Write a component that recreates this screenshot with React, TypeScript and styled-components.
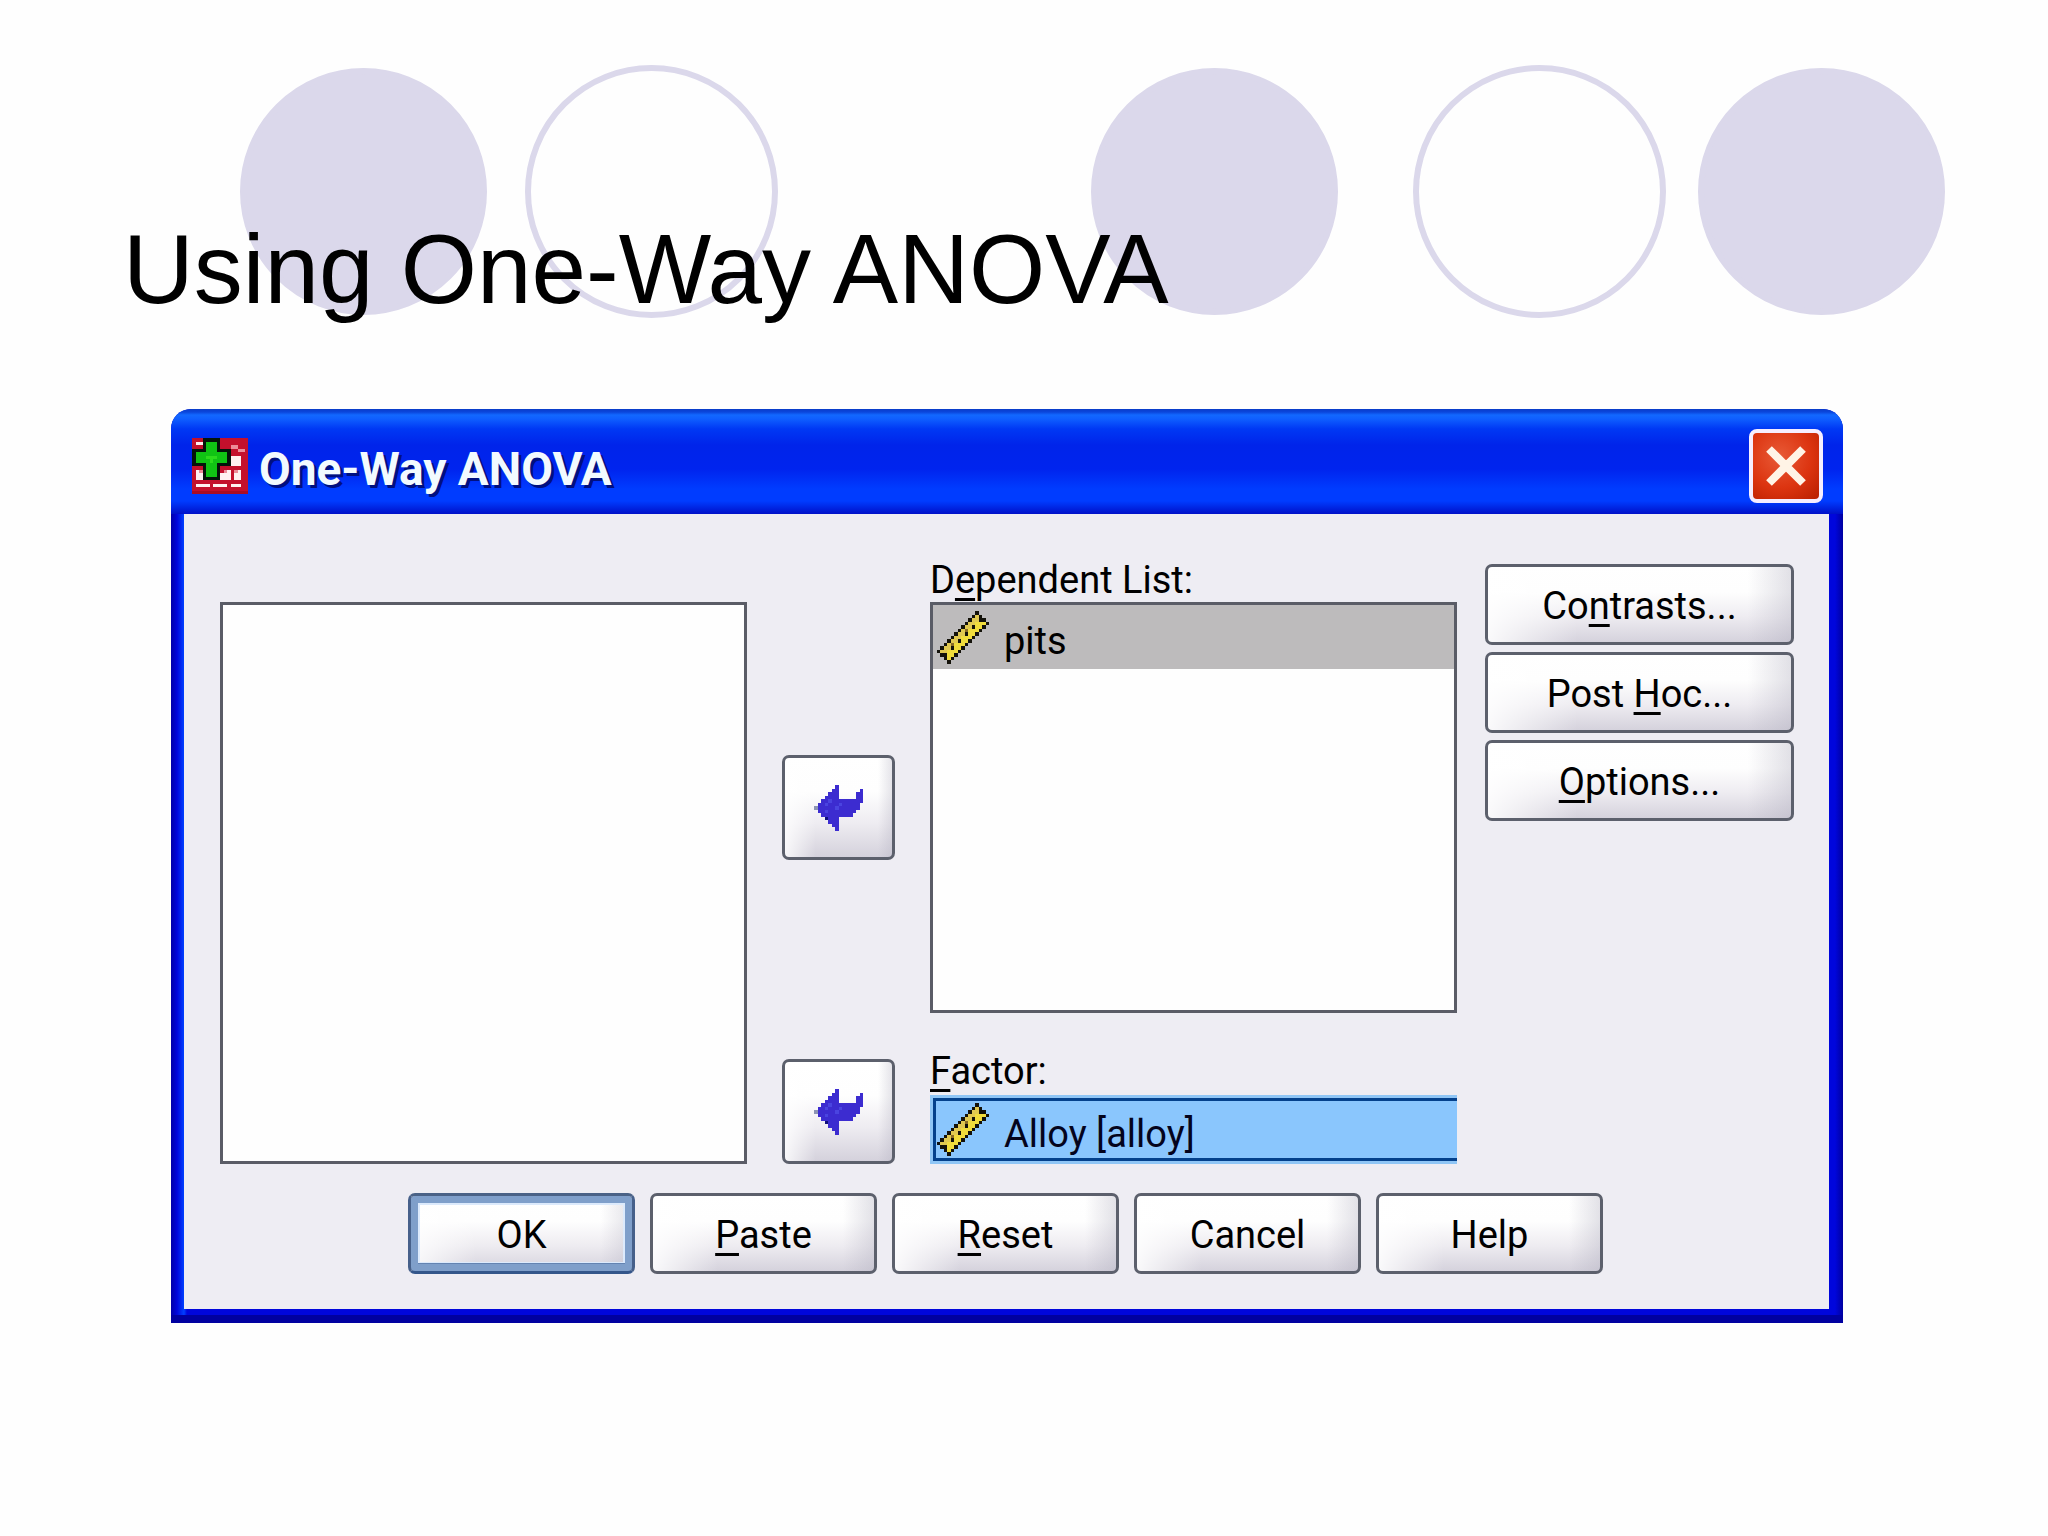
import React from "react";
import styled, { createGlobalStyle, css } from "styled-components";

const GlobalStyle = createGlobalStyle`
  *, *::before, *::after { box-sizing: border-box; }
  body { margin: 0; background: #fefefe; }
`;

const uiFont = css`
  font-family: Roboto, "Open Sans", sans-serif;
  font-size: 38px;
  line-height: 44px;
  color: #000;
`;

const Slide = styled.main`
  min-height: 100vh;
  background: #fefefe;
`;

const Header = styled.header`
  display: grid;
  padding: 65px 0 84px;
`;

const Circles = styled.div`
  grid-area: 1 / 1;
  display: flex;
  align-items: center;
  height: 253px;
  padding-left: 240px;
`;

const Circle = styled.span<{ $ring?: boolean; $gap: number }>`
  flex: none;
  width: ${(p) => (p.$ring ? 253 : 247)}px;
  height: ${(p) => (p.$ring ? 253 : 247)}px;
  margin-right: ${(p) => p.$gap}px;
  border-radius: 50%;
  border: 6px solid #dbd8eb;
  background: ${(p) => (p.$ring ? "transparent" : "#dbd8eb")};
`;

const SlideTitle = styled.h1`
  grid-area: 1 / 1;
  z-index: 1;
  margin: 0;
  padding: 148px 0 0 123px;
  font: 400 98px/112px "Liberation Sans", Arial, sans-serif;
  color: #000;
`;

const Window = styled.section`
  margin: 0 205px 0 171px;
  padding: 0 14px 14px 13px;
  border-radius: 20px 20px 0 0;
  background: linear-gradient(to right, #0000a8, #0006dc 6px, #0040ff 13px, #0006dc 16px, #0006dc calc(100% - 8px), #0000a0);
  box-shadow: inset 0 -8px 0 #0000a0;
`;

const TitleBar = styled.div`
  display: flex;
  align-items: center;
  gap: 11px;
  height: 105px;
  margin: 0 -14px 0 -13px;
  padding: 9px 20px 0 21px;
  border-radius: 20px 20px 0 0;
  background: linear-gradient(
    to bottom,
    #0a3cc8 0,
    #0a46dc 3px,
    #1268ff 6px,
    #0f5eff 10px,
    #0038f4 20px,
    #0024ea 36px,
    #0024ee 60px,
    #003cff 80px,
    #003cff 92px,
    #0010c8 105px
  );
`;

const WindowTitle = styled.h2`
  flex: 1;
  margin: 0;
  padding-top: 6px;
  font: 700 46px/56px Roboto, "Open Sans", sans-serif;
  color: #f2faff;
  text-shadow: 3px 3px 0 #001080;
`;

const CloseButton = styled.button`
  display: grid;
  place-items: center;
  width: 74px;
  height: 74px;
  padding: 0;
  border: 4px solid #f6eeff;
  border-radius: 8px;
  background: radial-gradient(circle at 40% 35%, #e85a36, #dc3410 55%, #b81e00);
`;

const Body = styled.div`
  padding: 44px 35px 35px 36px;
  background: #eeedf3;
`;

const Columns = styled.div`
  display: flex;
  gap: 28px;
`;

const Picker = styled.div`
  flex: 1;
  display: grid;
  grid-template-columns: minmax(0, 1fr) 113px minmax(0, 1fr);
  grid-template-rows: 44px 411px auto;
  column-gap: 35px;
`;

const listBox = css`
  margin: 0;
  padding: 0;
  border: 3px solid #5a5c66;
  background: #fefefe;
  list-style: none;
`;

const SourceList = styled.ul`
  ${listBox}
  grid-area: 2 / 1 / 4 / 2;
`;

const TargetList = styled.ul`
  ${listBox}
  grid-area: 2 / 3;
`;

const ListLabel = styled.span`
  ${uiFont}
  grid-area: 1 / 3;
`;

const VariableRow = styled.li`
  ${uiFont}
  display: flex;
  align-items: center;
  gap: 15px;
  height: 64px;
  padding: 0 4px;
  background: #bdbbbc;
`;

const VariableName = styled.span`
  padding-top: 8px;
`;

const FactorGroup = styled.div`
  grid-area: 3 / 3;
  padding-top: 36px;
`;

const FactorLabel = styled.label`
  ${uiFont}
  display: block;
`;

const FactorField = styled.div`
  display: flex;
  align-items: center;
  gap: 15px;
  height: 69px;
  margin-top: 2px;
  padding-left: 4px;
  border: 3px solid #8fc6f6;
  border-right-width: 0;
  background: #8ac6fd;
  box-shadow: inset 0 3px 0 #04418c, inset 0 -3px 0 #04418c, inset 3px 0 0 #04418c;
`;

const FactorInput = styled.input`
  ${uiFont}
  flex: 1;
  min-width: 0;
  padding: 8px 0 0;
  border: 0;
  outline: 0;
  background: transparent;
  color: #04041c;
`;

const raised = css`
  border: 3px solid #5c606c;
  border-radius: 7px;
  background:
    linear-gradient(to right, rgba(255, 255, 255, 0.9), rgba(255, 255, 255, 0) 30%, rgba(255, 255, 255, 0) 85%, rgba(176, 174, 190, 0.4)),
    linear-gradient(to bottom, #fff 0, #fefefe 35%, #eeecf1 65%, #d2cfda);
  background-origin: border-box;
`;

const MoveButton = styled.button<{ $row: number }>`
  ${raised}
  grid-area: ${(p) => p.$row} / 2;
  align-self: ${(p) => (p.$row === 3 ? "end" : "center")};
  display: grid;
  place-items: center;
  height: 105px;
  padding: 0;
`;

const SideButtons = styled.div`
  display: flex;
  flex-direction: column;
  gap: 7px;
  width: 309px;
  padding-top: 6px;
`;

const CommandRow = styled.div`
  display: flex;
  justify-content: center;
  gap: 15px;
  margin-top: 29px;
  padding-right: 3px;
`;

const PushButton = styled.button<{ $primary?: boolean }>`
  ${uiFont}
  ${raised}
  height: 81px;
  padding: 3px 0 0;
  ${(p) =>
    p.$primary &&
    css`
      border-color: #4a6286 #46608a #34568a #46608a;
      box-shadow: inset 0 0 0 7px #7f9fca, inset 0 -8px 0 #6484b2, inset 0 0 0 9px #dceafc;
    `}
`;

const CommandButton = styled(PushButton)`
  width: 227px;
`;

const Mnemonic = styled.span`
  text-decoration: underline;
  text-decoration-thickness: 3px;
  text-decoration-skip-ink: none;
  text-underline-offset: 5px;
`;

/* Sprites are drawn cell by cell, one character per cell. */
function Sprite({ rows, palette, width, height }: {
  rows: string[];
  palette: Record<string, string>;
  width: number;
  height: number;
}) {
  return (
    <svg
      width={width}
      height={height}
      viewBox={`0 0 ${rows[0].length} ${rows.length}`}
      preserveAspectRatio="none"
      shapeRendering="crispEdges"
      aria-hidden="true"
    >
      {rows.flatMap((row, y) =>
        [...row].map((c, x) =>
          palette[c] ? <rect key={`${x}-${y}`} x={x} y={y} width={1} height={1} fill={palette[c]} /> : null
        )
      )}
    </svg>
  );
}

const appRows = [
  "rrrkkkkkrrrrrrrr",
  "rwwkgggkrrrrrrrr",
  "rrrkgggkrrrpprrr",
  "kkkkgggkkkkrrppr",
  "kgggggggggkrrrrr",
  "kgggGGGgggkwwwrr",
  "kggggGggggkwwwrr",
  "kkkkgggkkkkwwwrr",
  "rrrkgggkrrrrrrrr",
  "rwpkgggkrpwrpwrr",
  "rwwkgggkwwwrwwrr",
  "rwwkkkkkwwwrwwrr",
  "rrrrrrrrrrrrrrrr",
  "rwwwwrwwwwrwwwrr",
  "rrrrrrrrrrrrrrrr",
  "RRRRRRRRRRRRRRRR",
];

const arrowRows = [
  "......b.......",
  ".....bb......b",
  "....bbb.....bb",
  "...bbbb.....bb",
  "..bbBbbbbbbbbb",
  ".bbBbbbBbbbbb.",
  "tbbbbbBbbbbbb.",
  ".bbBbbbbbbbb..",
  "..bbbbbbbbb...",
  "...dbbb.......",
  "....bbb.......",
  ".....bb.......",
  "......b.......",
];

/* A ruler lying on the diagonal: a band of cells between two anti-diagonals. */
const rulerRows = Array.from({ length: 15 }, (_, r) =>
  Array.from({ length: 15 }, (_, c) => {
    const s = r + c;
    const d = Math.abs(r - c);
    if (s < 11 || s > 17 || d > 11) return ".";
    if (s === 11 || s === 17 || d === 11) return "k";
    if (s === 14 && r % 2 === 0) return "k";
    if (s === 13 && r % 4 === 1) return "o";
    return s < 14 ? "y" : "Y";
  }).join("")
);

const AppIcon = () => (
  <Sprite rows={appRows} width={56} height={56}
    palette={{ r: "#c4102c", R: "#a80c24", k: "#04140a", g: "#10c414", G: "#2cdc1c", w: "#fff0f0", p: "#ec8c98" }} />
);
const ArrowIcon = () => (
  <Sprite rows={arrowRows} width={49} height={46}
    palette={{ b: "#3c2cd0", B: "#4a44e0", d: "#10107c", t: "#8c94b4" }} />
);
const RulerIcon = () => (
  <Sprite rows={rulerRows} width={52} height={53}
    palette={{ k: "#14120a", y: "#e0c850", Y: "#f0dc3c", o: "#8a6c28" }} />
);

const CloseIcon = () => (
  <svg width="42" height="42" viewBox="0 0 42 42" aria-hidden="true">
    <path d="M4 4 38 38M38 4 4 38" stroke="#fff4e6" strokeWidth="8" />
  </svg>
);

export default function App() {
  return (
    <>
      <GlobalStyle />
      <Slide>
        <Header>
          <Circles aria-hidden="true">
            <Circle $gap={38} />
            <Circle $ring $gap={313} />
            <Circle $gap={75} />
            <Circle $ring $gap={32} />
            <Circle $gap={0} />
          </Circles>
          <SlideTitle>Using One-Way ANOVA</SlideTitle>
        </Header>

        <Window aria-labelledby="window-title">
          <TitleBar>
            <AppIcon />
            <WindowTitle id="window-title">One-Way ANOVA</WindowTitle>
            <CloseButton type="button" aria-label="Close">
              <CloseIcon />
            </CloseButton>
          </TitleBar>

          <Body>
            <Columns>
              <Picker>
                <SourceList role="listbox" aria-label="Variables" />
                <MoveButton type="button" $row={2} aria-label="Move to Dependent List">
                  <ArrowIcon />
                </MoveButton>
                <ListLabel id="dependent-label">
                  D<Mnemonic>e</Mnemonic>pendent List:
                </ListLabel>
                <TargetList role="listbox" aria-labelledby="dependent-label">
                  <VariableRow role="option" aria-selected="true">
                    <RulerIcon />
                    <VariableName>pits</VariableName>
                  </VariableRow>
                </TargetList>
                <MoveButton type="button" $row={3} aria-label="Move to Factor">
                  <ArrowIcon />
                </MoveButton>
                <FactorGroup>
                  <FactorLabel htmlFor="factor">
                    <Mnemonic>F</Mnemonic>actor:
                  </FactorLabel>
                  <FactorField>
                    <RulerIcon />
                    <FactorInput id="factor" type="text" readOnly value="Alloy [alloy]" />
                  </FactorField>
                </FactorGroup>
              </Picker>

              <SideButtons>
                <PushButton type="button">
                  Co<Mnemonic>n</Mnemonic>trasts...
                </PushButton>
                <PushButton type="button">
                  Post <Mnemonic>H</Mnemonic>oc...
                </PushButton>
                <PushButton type="button">
                  <Mnemonic>O</Mnemonic>ptions...
                </PushButton>
              </SideButtons>
            </Columns>

            <CommandRow>
              <CommandButton type="button" $primary>OK</CommandButton>
              <CommandButton type="button">
                <Mnemonic>P</Mnemonic>aste
              </CommandButton>
              <CommandButton type="button">
                <Mnemonic>R</Mnemonic>eset
              </CommandButton>
              <CommandButton type="button">Cancel</CommandButton>
              <CommandButton type="button">Help</CommandButton>
            </CommandRow>
          </Body>
        </Window>
      </Slide>
    </>
  );
}
